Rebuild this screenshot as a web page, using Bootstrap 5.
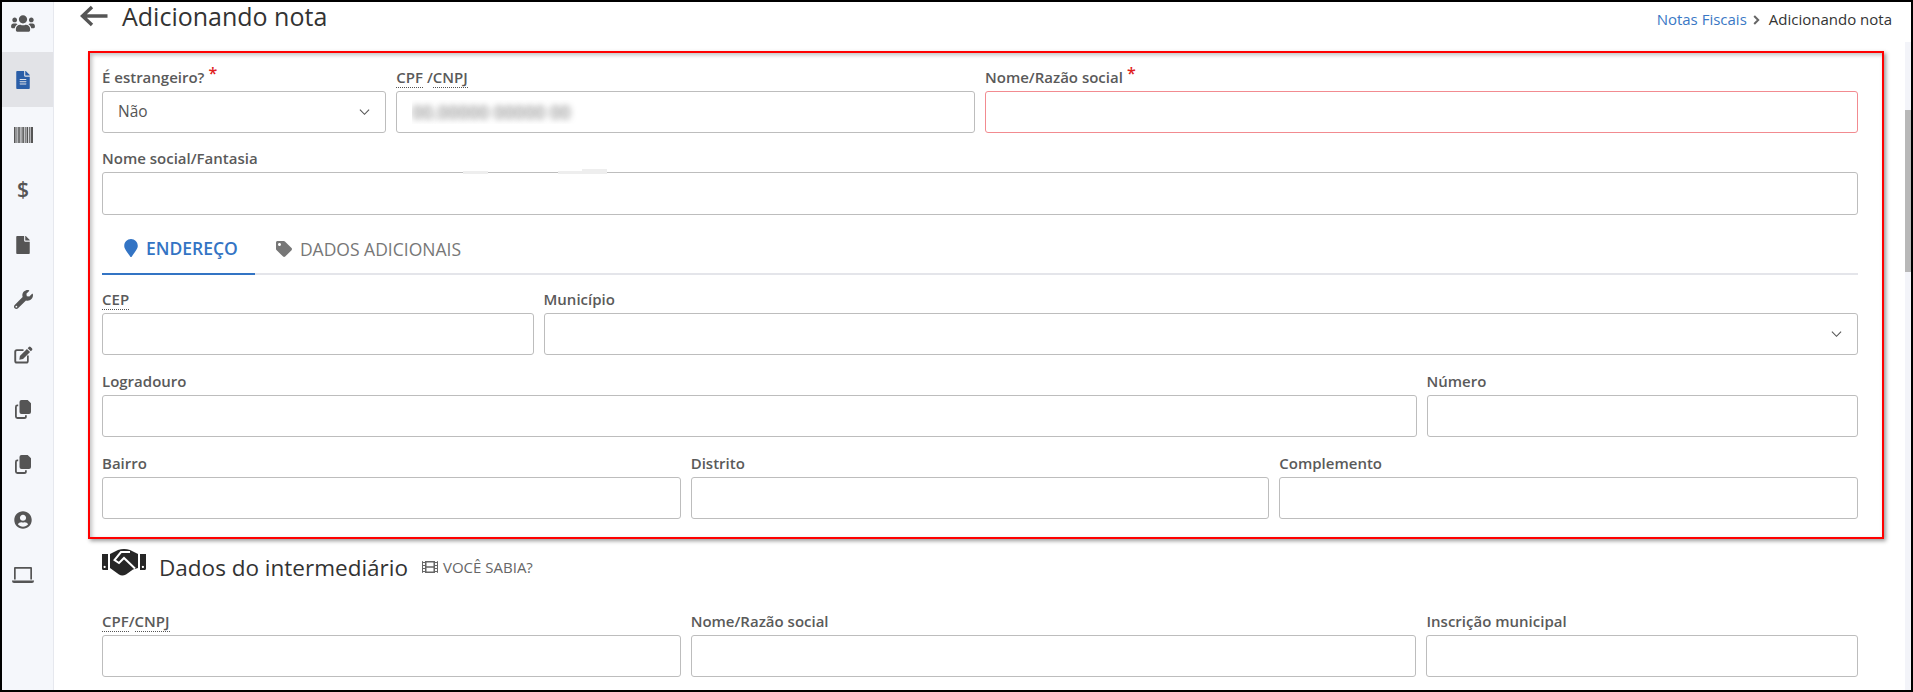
<!doctype html>
<html lang="pt-BR"><head><meta charset="utf-8"><title>Adicionando nota</title>
<link href="https://cdn.jsdelivr.net/npm/bootstrap@5.3.0/dist/css/bootstrap.min.css" rel="stylesheet">
<style>
html,body{height:100%;overflow:hidden}
body{font-family:"Open Sans","Noto Sans",sans-serif;color:#333;background:#000;padding:2px}
.app-frame{height:688px;background:#fff;overflow:hidden}
.side-rail{width:52px;background:#f5f7fb;border-right:1px solid #e6e8ee;flex:none}
.rail-item{height:55px;color:#555;padding-right:9px}
.rail-item.is-on{background:#e2e3e7;color:#2a5ea8}
.rail-item svg{fill:currentColor;display:block}
.rail-first{height:50px;padding-bottom:8px}
.rail-dollar{font-size:21px;font-weight:600;line-height:1}
.main-pane{min-width:0;position:relative}
.head-line{height:49px;padding:0 19px 0 26px}
.page-ttl{font-size:25px;font-weight:400;color:#333;margin:0 0 0 14px;line-height:29px}
.crumb-box{font-size:15px;padding-top:6px;line-height:22px}
.crumb-box a{color:#3a78c5;text-decoration:none}
.crumb-arrow{margin:7px 9px 0 6px}
.arrow-back{margin-top:3px}
.red-box{margin:0 27px 0 34px;border:2px solid #f00;box-shadow:2px 2px 4px rgba(0,0,0,.4),inset 2px 2px 4px rgba(0,0,0,.25);padding:12px 24px 18px 12px}
.form-lbl{font-size:15px;font-weight:600;color:#5a5a5a;line-height:20px;margin:0;display:block;height:26px;padding-top:2px;white-space:nowrap}
.form-lbl abbr{text-decoration:none;border-bottom:1px dotted #555;cursor:help}
.req-star{color:#e02020;font-size:16px;position:relative;top:-4px;margin-left:4px}
.field-box{height:42px;border:1px solid #bdbdbd;border-radius:3px;font-size:15.5px;color:#555;padding:0 15px;box-shadow:none}
.field-box.form-select{background-image:url("data:image/svg+xml,%3csvg xmlns='http://www.w3.org/2000/svg' viewBox='0 0 12 8'%3e%3cpath fill='none' stroke='%23555' stroke-width='1.2' d='M1 1.5l5 5 5-5'/%3e%3c/svg%3e");background-size:11px 8px;background-position:right 15px center}
.field-box.err-box{border-color:#f28b90}
.blur-val{color:transparent;text-shadow:0 0 6px #666;font-size:18px}
.field-tall{height:43px}
.row-tight{--bs-gutter-x:10px;--bs-gutter-y:0;margin-bottom:14px}
.row-first{margin-bottom:13px}
.tab-strip{border-bottom:2px solid #e4e5ea;margin-top:11px;margin-bottom:12px;height:49px}
.tab-item{border:0;height:49px;padding:0 17px 3px 21px;font-size:17.5px;color:#777;background:none;border-radius:0}
.tab-item.is-on{color:#3374c4;font-weight:600;border-bottom:2px solid #3374c4;padding-left:22px}
.tab-item svg{fill:currentColor;margin-right:8px}
.patch-mark{position:absolute;background:#eee;height:3px;top:25px}
.patch-a{left:366px;width:25px}
.patch-b{left:461px;width:24px}
.patch-c{left:485px;width:25px;top:23px;height:5px}
.section-head{height:70px;margin:0 53px 0 48px}
.hand-ico{margin-top:10px}
.section-ttl{font-size:22.5px;font-weight:400;color:#333;margin:15px 0 0 13px;line-height:27px}
.know-link{font-size:15px;color:#666;margin:18px 0 0 14px;line-height:20px}
.know-link svg{margin-right:5px}
.bottom-zone{margin:0 53px 0 48px}
.scroll-trk{position:absolute;right:0;top:40px;bottom:0;width:6px;background:#f3f4f9}
.scroll-thm{position:absolute;right:0;top:108px;height:162px;width:6px;background:#b8b8b8}
.field-wrap{position:relative}
</style></head>
<body>
<div class="app-frame d-flex">
 <nav class="side-rail d-flex flex-column">
  <div class="rail-item rail-first d-flex align-items-center justify-content-center">
   <svg width="24" height="19" viewBox="0 0 640 512"><path d="M96 224c35.3 0 64-28.7 64-64s-28.7-64-64-64-64 28.7-64 64 28.7 64 64 64zm448 0c35.3 0 64-28.7 64-64s-28.7-64-64-64-64 28.7-64 64 28.7 64 64 64zm32 32h-64c-17.6 0-33.5 7.1-45.1 18.6 40.3 22.1 68.9 62 75.1 109.4h66c17.7 0 32-14.3 32-32v-32c0-35.3-28.7-64-64-64zm-256 0c61.9 0 112-50.1 112-112S381.9 32 320 32 208 82.1 208 144s50.1 112 112 112zm76.8 32h-8.3c-20.8 10-43.9 16-68.5 16s-47.6-6-68.5-16h-8.3C179.6 288 128 339.6 128 403.2V432c0 26.5 21.5 48 48 48h288c26.5 0 48-21.5 48-48v-28.8c0-63.6-51.6-115.2-115.2-115.2zm-223.7-13.4C161.5 263.1 145.6 256 128 256H64c-35.3 0-64 28.7-64 64v32c0 17.7 14.3 32 32 32h65.9c6.3-47.4 34.9-87.3 75.2-109.4z"/></svg>
  </div>
  <div class="rail-item is-on d-flex align-items-center justify-content-center">
   <svg width="14" height="18" viewBox="0 0 384 512"><path d="M224 136V0H24C10.7 0 0 10.7 0 24v464c0 13.3 10.7 24 24 24h336c13.3 0 24-10.7 24-24V160H248c-13.2 0-24-10.8-24-24zm64 236c0 6.6-5.4 12-12 12H108c-6.6 0-12-5.4-12-12v-8c0-6.6 5.4-12 12-12h168c6.6 0 12 5.4 12 12v8zm0-64c0 6.6-5.4 12-12 12H108c-6.6 0-12-5.4-12-12v-8c0-6.6 5.4-12 12-12h168c6.6 0 12 5.4 12 12v8zm0-72v8c0 6.6-5.4 12-12 12H108c-6.6 0-12-5.4-12-12v-8c0-6.6 5.4-12 12-12h168c6.6 0 12 5.4 12 12zm96-114.1v6.1H256V0h6.1c6.4 0 12.5 2.5 17 7l97.9 98c4.5 4.5 7 10.6 7 16.9z"/></svg>
  </div>
  <div class="rail-item d-flex align-items-center justify-content-center">
   <svg width="19" height="16" viewBox="0 0 19 16"><path d="M0 0h1.6v16H0zM2.400 0h1v16h-1zM4.200 0h1.600v16H4.200zM6.600 0h.9v16h-.9zM8.300 0h1.600v16H8.300zM10.700 0h1v16h-1zM12.500 0h1.600v16h-1.600zM14.900 0h.9v16h-.9zM16.600 0H19v16h-2.400z"/></svg>
  </div>
  <div class="rail-item d-flex align-items-center justify-content-center"><span class="rail-dollar">$</span></div>
  <div class="rail-item d-flex align-items-center justify-content-center">
   <svg width="14" height="18" viewBox="0 0 384 512"><path d="M224 136V0H24C10.7 0 0 10.7 0 24v464c0 13.3 10.7 24 24 24h336c13.3 0 24-10.7 24-24V160H248c-13.2 0-24-10.8-24-24zm160-14.1v6.1H256V0h6.1c6.4 0 12.5 2.5 17 7l97.9 98c4.5 4.5 7 10.6 7 16.9z"/></svg>
  </div>
  <div class="rail-item d-flex align-items-center justify-content-center">
   <svg width="19" height="19" viewBox="0 0 512 512"><path d="M507.730 109.100c-2.240-9.030-13.540-12.090-20.120-5.510l-74.360 74.360-67.880-11.310-11.310-67.880 74.360-74.360c6.620-6.620 3.430-17.900-5.660-20.160-47.380-11.740-99.550.91-136.580 37.930-39.640 39.640-50.550 97.100-34.050 147.200L18.740 402.760c-24.990 24.990-24.990 65.510 0 90.500 24.990 24.990 65.510 24.990 90.500 0l213.210-213.210c50.120 16.710 107.470 5.680 147.370-34.220 37.070-37.070 49.700-89.320 37.910-136.730zM64 472c-13.250 0-24-10.750-24-24 0-13.260 10.750-24 24-24s24 10.740 24 24c0 13.250-10.750 24-24 24z"/></svg>
  </div>
  <div class="rail-item d-flex align-items-center justify-content-center">
   <svg width="19" height="18" viewBox="0 0 20 18"><path d="M3 3h7v1.800H3.200a.9.9 0 0 0-.9.9V15a.9.9 0 0 0 .9.9h9.600a.9.9 0 0 0 .9-.9V9.500h1.800V15.300A2.700 2.700 0 0 1 12.800 18H3a2.700 2.700 0 0 1-2.700-2.700V5.700A2.700 2.700 0 0 1 3 3z"/><path d="M15.600.6a1.300 1.300 0 0 1 1.900 0l1.400 1.400a1.300 1.300 0 0 1 0 1.900l-1.200 1.200-3.300-3.300zM13.600 2.600l3.300 3.300-7.400 7.400-3.900.6.6-3.900z"/></svg>
  </div>
  <div class="rail-item d-flex align-items-center justify-content-center">
   <svg width="16" height="19" viewBox="0 0 16 19"><path d="M6.500 0h6.200L16 3.200V12a2 2 0 0 1-2 2H6.500a2 2 0 0 1-2-2V2a2 2 0 0 1 2-2z"/><path d="M3.200 4.500v1.800H2.300a.5.5 0 0 0-.5.5v9.400c0 .5.3.9.8.9h6.800a.6.6 0 0 0 .6-.6V15.200h1.800v1.300A2.500 2.500 0 0 1 9.300 19H2.400A2.400 2.400 0 0 1 0 16.600V6.900a2.400 2.400 0 0 1 2.400-2.400z"/></svg>
  </div>
  <div class="rail-item d-flex align-items-center justify-content-center">
   <svg width="16" height="19" viewBox="0 0 16 19"><path d="M6.500 0h6.200L16 3.200V12a2 2 0 0 1-2 2H6.500a2 2 0 0 1-2-2V2a2 2 0 0 1 2-2z"/><path d="M3.200 4.500v1.800H2.300a.5.5 0 0 0-.5.5v9.400c0 .5.3.9.8.9h6.800a.6.6 0 0 0 .6-.6V15.200h1.800v1.300A2.500 2.500 0 0 1 9.300 19H2.400A2.400 2.400 0 0 1 0 16.600V6.900a2.400 2.400 0 0 1 2.400-2.400z"/></svg>
  </div>
  <div class="rail-item d-flex align-items-center justify-content-center">
   <svg width="18" height="18" viewBox="0 0 496 512"><path d="M248 8C111 8 0 119 0 256s111 248 248 248 248-111 248-248S385 8 248 8zm0 96c48.600 0 88 39.400 88 88s-39.400 88-88 88-88-39.400-88-88 39.400-88 88-88zm0 344c-58.700 0-111.300-26.600-146.500-68.200 18.800-35.400 55.600-59.800 98.500-59.800 2.400 0 4.800.4 7.100 1.100 13 4.200 26.600 6.900 40.900 6.900 14.300 0 28-2.700 40.900-6.900 2.300-.7 4.700-1.100 7.100-1.100 42.900 0 79.700 24.400 98.500 59.800C359.300 421.400 306.700 448 248 448z"/></svg>
  </div>
  <div class="rail-item d-flex align-items-center justify-content-center">
   <svg width="22" height="16" viewBox="0 0 22 16"><path d="M3 0h16a1 1 0 0 1 1 1v11.500h-1.700V1.700H3.700v10.800H2V1a1 1 0 0 1 1-1zM0 13.400h22v.6a2 2 0 0 1-2 2H2a2 2 0 0 1-2-2z"/></svg>
  </div>
 </nav>
 <main class="main-pane flex-grow-1">
  <div class="scroll-trk"></div><div class="scroll-thm"></div>
  <div class="head-line d-flex justify-content-between">
   <div class="d-flex align-items-start">
    <svg class="arrow-back" width="28" height="22" viewBox="0 0 28 22"><path d="M27.500 11H3M12 2l-9.500 9 9.500 9" fill="none" stroke="#555" stroke-width="3.400"/></svg>
    <h1 class="page-ttl">Adicionando nota</h1>
   </div>
   <div class="crumb-box d-flex align-items-start">
    <a href="#">Notas Fiscais</a>
    <svg class="crumb-arrow" width="7" height="10" viewBox="0 0 7 10"><path d="M1.200 1l4 4-4 4" fill="none" stroke="#666" stroke-width="2"/></svg>
    <span>Adicionando nota</span>
   </div>
  </div>
  <section class="red-box">
   <div class="row row-tight row-first">
    <div class="col-2"><label class="form-lbl">É estrangeiro?<span class="req-star">*</span></label>
     <select class="form-select field-box"><option>Não</option></select></div>
    <div class="col-4"><label class="form-lbl"><abbr>CPF</abbr> /<abbr>CNPJ</abbr></label>
     <input class="form-control field-box blur-val" value="00.00000 00000 00"></div>
    <div class="col-6"><label class="form-lbl">Nome/Razão social<span class="req-star">*</span></label>
     <input class="form-control field-box err-box"></div>
   </div>
   <div class="row row-tight mb-0">
    <div class="col-12 field-wrap"><label class="form-lbl">Nome social/Fantasia</label>
     <input class="form-control field-box field-tall">
     <span class="patch-mark patch-a"></span>
     <span class="patch-mark patch-b"></span>
     <span class="patch-mark patch-c"></span>
    </div>
   </div>
   <div class="tab-strip d-flex">
    <button type="button" class="tab-item is-on d-flex align-items-center"><svg width="14" height="18" viewBox="0 0 384 512"><path d="M172.268 501.670C26.970 291.031 0 269.413 0 192 0 85.961 85.961 0 192 0s192 85.961 192 192c0 77.413-26.970 99.031-172.268 309.670-9.535 13.774-29.930 13.773-39.464 0z"/></svg>ENDEREÇO</button>
    <button type="button" class="tab-item d-flex align-items-center"><svg width="16" height="16" viewBox="0 0 512 512"><path d="M0 252.118V48C0 21.490 21.490 0 48 0h204.118a48 48 0 0 1 33.941 14.059l211.882 211.882c18.745 18.745 18.745 49.137 0 67.882L293.823 497.941c-18.745 18.745-49.137 18.745-67.882 0L14.059 286.059A48 48 0 0 1 0 252.118zM112 64c-26.510 0-48 21.490-48 48s21.490 48 48 48 48-21.490 48-48-21.490-48-48-48z"/></svg>DADOS ADICIONAIS</button>
   </div>
   <div class="row row-tight">
    <div class="col-3"><label class="form-lbl"><abbr>CEP</abbr></label><input class="form-control field-box"></div>
    <div class="col-9"><label class="form-lbl">Município</label><select class="form-select field-box"><option></option></select></div>
   </div>
   <div class="row row-tight">
    <div class="col-9"><label class="form-lbl">Logradouro</label><input class="form-control field-box"></div>
    <div class="col-3"><label class="form-lbl">Número</label><input class="form-control field-box"></div>
   </div>
   <div class="row row-tight mb-0">
    <div class="col-4"><label class="form-lbl">Bairro</label><input class="form-control field-box"></div>
    <div class="col-4"><label class="form-lbl">Distrito</label><input class="form-control field-box"></div>
    <div class="col-4"><label class="form-lbl">Complemento</label><input class="form-control field-box"></div>
   </div>
  </section>
  <div class="section-head d-flex align-items-start">
   <svg class="hand-ico" width="44" height="27" viewBox="0 0 44 27"><path fill="#262626" fill-rule="evenodd" d="M0 5h6v16H1.500A1.500 1.500 0 0 1 0 19.500zM2.600 16.800a1.100 1.100 0 1 0 .01 0zM38 5h6v14.500a1.500 1.500 0 0 1-1.500 1.500H38zM40.900 16.800a1.100 1.100 0 1 0 .01 0z"/><path fill="#262626" d="M8 5l8-4q6-2 12 0l8 4v14l-5 1.500-7 5q-4 2-7 0l-9-6.500z"/><path fill="none" stroke="#fff" stroke-width="2" d="M28 3H19l-6.500 8 4.500 3 5-5 11 10.500"/></svg>
   <h2 class="section-ttl">Dados do intermediário</h2>
   <span class="know-link d-flex align-items-center"><svg width="16" height="16" viewBox="0 0 512 512" fill="#666"><path d="M488 64h-8v20c0 6.600-5.400 12-12 12h-40c-6.600 0-12-5.400-12-12V64H96v20c0 6.600-5.400 12-12 12H44c-6.600 0-12-5.400-12-12V64h-8C10.700 64 0 74.700 0 88v336c0 13.300 10.700 24 24 24h8v-20c0-6.600 5.400-12 12-12h40c6.600 0 12 5.400 12 12v20h320v-20c0-6.600 5.400-12 12-12h40c6.600 0 12 5.400 12 12v20h8c13.300 0 24-10.700 24-24V88c0-13.300-10.700-24-24-24zM96 372c0 6.600-5.400 12-12 12H44c-6.600 0-12-5.400-12-12v-40c0-6.600 5.400-12 12-12h40c6.600 0 12 5.400 12 12v40zm0-96c0 6.600-5.400 12-12 12H44c-6.600 0-12-5.400-12-12v-40c0-6.600 5.400-12 12-12h40c6.600 0 12 5.400 12 12v40zm0-96c0 6.600-5.400 12-12 12H44c-6.600 0-12-5.400-12-12v-40c0-6.600 5.400-12 12-12h40c6.600 0 12 5.400 12 12v40zm272 208c0 6.600-5.400 12-12 12H156c-6.600 0-12-5.400-12-12v-96c0-6.600 5.400-12 12-12h200c6.600 0 12 5.400 12 12v96zm0-168c0 6.600-5.400 12-12 12H156c-6.600 0-12-5.400-12-12v-96c0-6.600 5.400-12 12-12h200c6.600 0 12 5.400 12 12v96zm112 152c0 6.600-5.400 12-12 12h-40c-6.600 0-12-5.400-12-12v-40c0-6.600 5.400-12 12-12h40c6.600 0 12 5.400 12 12v40zm0-96c0 6.600-5.400 12-12 12h-40c-6.600 0-12-5.400-12-12v-40c0-6.600 5.400-12 12-12h40c6.600 0 12 5.400 12 12v40zm0-96c0 6.600-5.400 12-12 12h-40c-6.600 0-12-5.400-12-12v-40c0-6.600 5.400-12 12-12h40c6.600 0 12 5.400 12 12v40z"/></svg>VOCÊ SABIA?</span>
  </div>
  <div class="bottom-zone">
   <div class="row row-tight">
    <div class="col-4"><label class="form-lbl"><abbr>CPF</abbr>/<abbr>CNPJ</abbr></label><input class="form-control field-box"></div>
    <div class="col-5"><label class="form-lbl">Nome/Razão social</label><input class="form-control field-box"></div>
    <div class="col-3"><label class="form-lbl">Inscrição municipal</label><input class="form-control field-box"></div>
   </div>
  </div>
 </main>
</div>
<script src="https://cdn.jsdelivr.net/npm/bootstrap@5.3.0/dist/js/bootstrap.bundle.min.js"></script>
</body></html>
